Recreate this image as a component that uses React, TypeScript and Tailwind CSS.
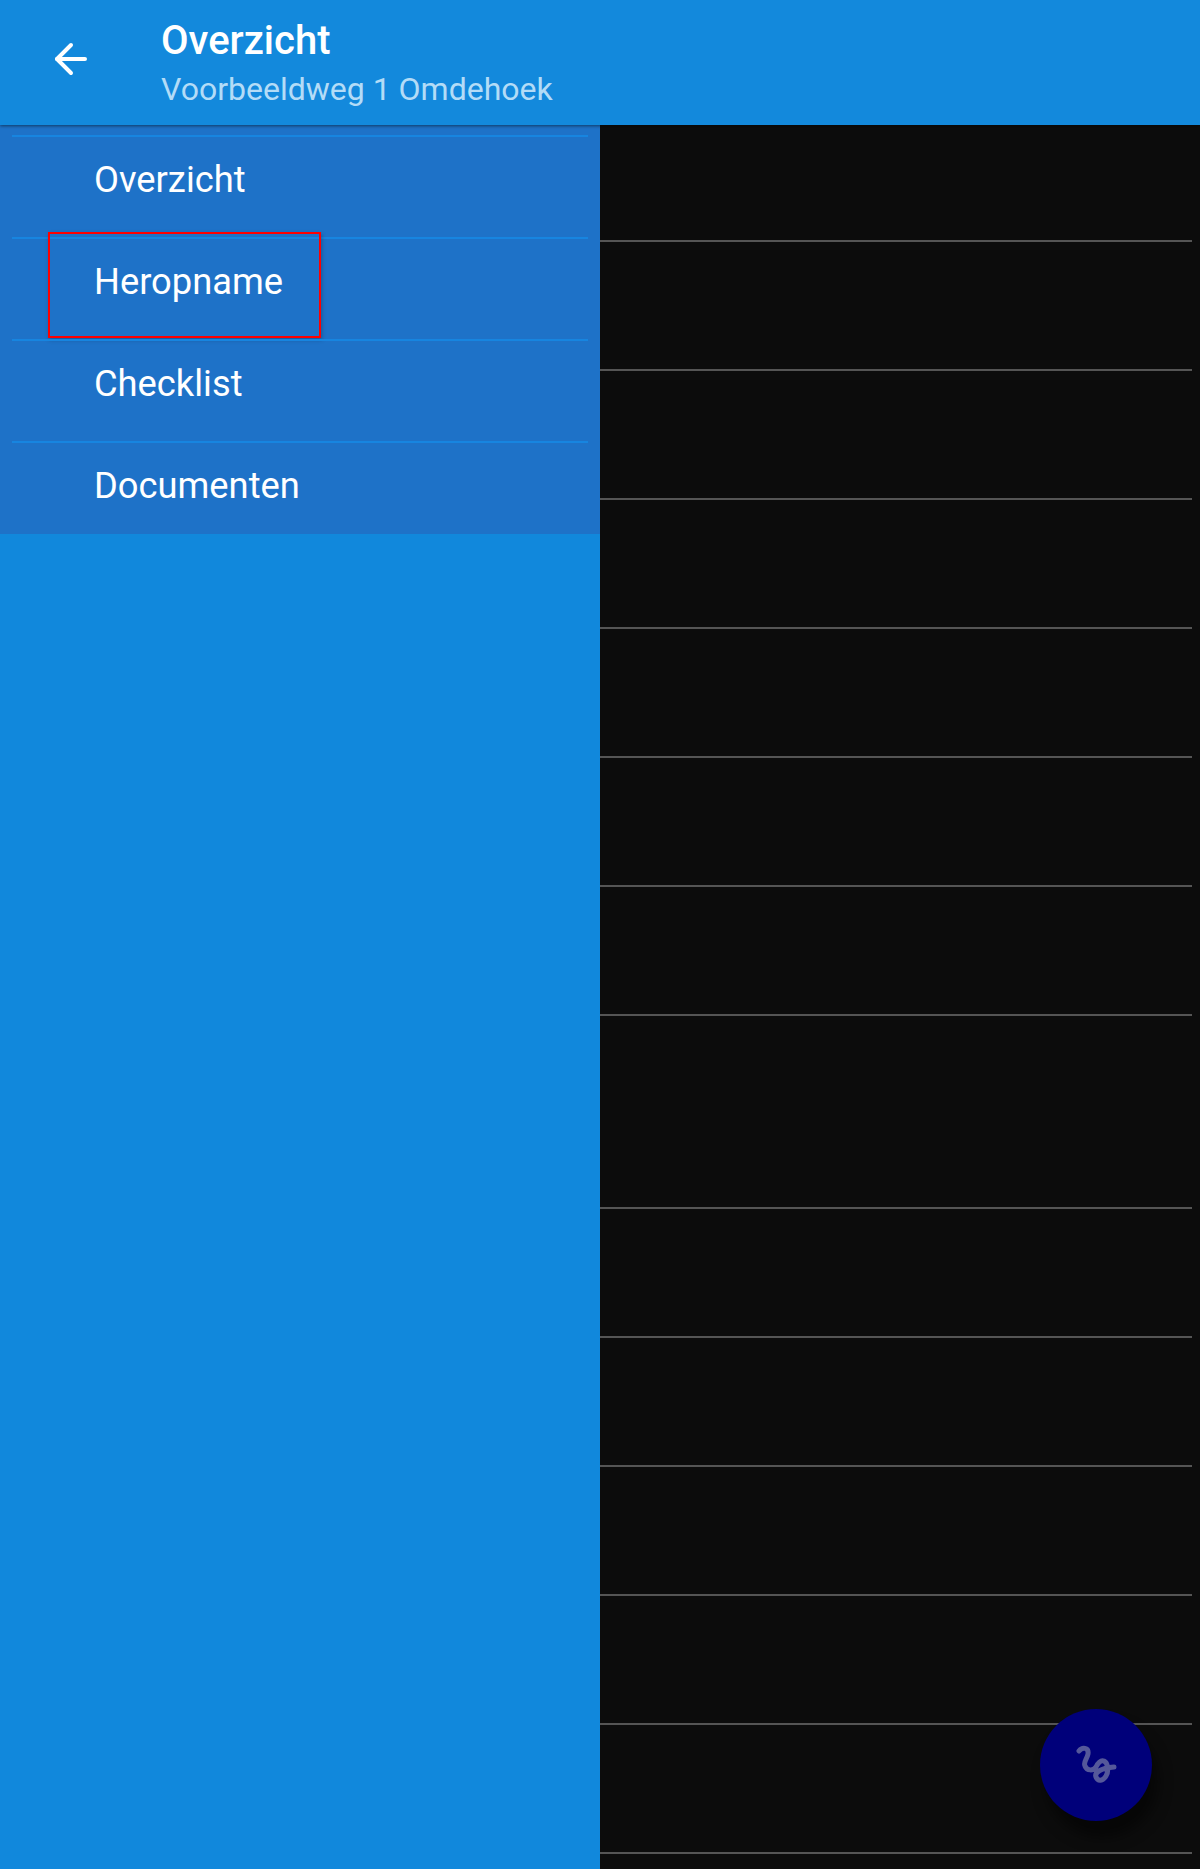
import { ArrowLeft } from 'lucide-react';

const menuItems = ['Overzicht', 'Heropname', 'Checklist', 'Documenten'];
const rowHeights = [117, 129, 129, 129, 129, 129, 129, 193, 129, 129, 129, 129, 129];

export default function App() {
  return (
    <div className="relative flex h-[1869px] w-[1200px] flex-col overflow-hidden bg-[#0c0c0c] font-['Roboto',sans-serif]">
      <header className="z-10 flex h-[125px] shrink-0 items-start bg-[#1389dc] shadow-[0_1px_3px_rgba(0,0,0,0.5)]">
        <div className="ml-[47px] mt-[35px] flex w-[114px]">
          <ArrowLeft size={48} strokeWidth={2} className="text-white" />
        </div>
        <div className="flex flex-col">
          <h1 className="mt-[18px] text-[40px] leading-[46px] font-medium text-white">Overzicht</h1>
          <p className="mt-[6px] text-[32px] leading-[38px] text-[#b3dcf7]">Voorbeeldweg 1 Omdehoek</p>
        </div>
      </header>

      <div className="flex flex-1">
        <aside className="h-full w-[600px] shrink-0 bg-[#1188dc]">
          <nav className="bg-[#1e72c8] pt-[10px] pb-[1px]">
            {menuItems.map((item, i) => (
              <div
                key={item}
                className={
                  i === 3
                    ? 'relative mx-3 h-[92px] border-t-2 border-[#1785e0]'
                    : 'relative mx-3 h-[102px] border-t-2 border-[#1785e0]'
                }
              >
                <span className="absolute left-[82px] top-[21px] text-[36.3px] leading-[44px] text-white">{item}</span>
                {item === 'Heropname' && (
                  <div className="absolute top-[-7px] left-[36px] h-[106px] w-[273px] border-2 border-[#ff0000] shadow-[1px_2px_4px_rgba(0,0,0,0.25)]" />
                )}
              </div>
            ))}
          </nav>
        </aside>

        <main className="flex flex-1 flex-col">
          {rowHeights.map((h, i) => (
            <div key={i} className="mr-2 shrink-0 border-b-2 border-[#555555]" style={{ height: h }} />
          ))}
        </main>
      </div>

      <button className="absolute left-[1040px] top-[1709px] flex h-[112px] w-[112px] items-center justify-center rounded-full bg-[#00007a] shadow-[6px_16px_14px_rgba(0,0,0,0.5)]">
        <svg width="60" height="60" viewBox="0 0 60 60" fill="none" stroke="#55589a" strokeWidth="5" strokeLinecap="round" strokeLinejoin="round">
          <path d="M13 16C16 12 23 12 22 19C21 24 17 27 19 31C21 36 27 36 30 32C32 28 35 25 38 26C42 28 43 36 40 41C37 46 32 47 30 42C28 37 36 33 48 32" />
        </svg>
      </button>
    </div>
  );
}
